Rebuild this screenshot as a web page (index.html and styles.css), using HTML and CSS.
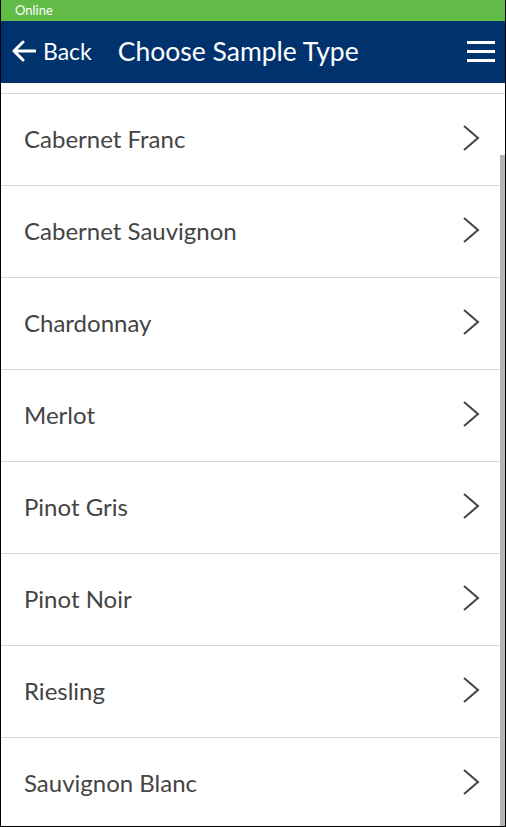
FILE: index.html
```html
<!DOCTYPE html>
<html lang="en">

<head>
    <meta charset="UTF-8">
    <meta name="viewport" content="width=device-width, initial-scale=1.0">
    <title>Choose Sample Type</title>
    <link rel="stylesheet" href="styles.css">
</head>

<body>
    <div class="app">
        <div class="status">Online</div>
        <header class="topbar">
            <a class="back" href="#">
                <svg width="24" height="22" viewBox="0 0 24 22">
                    <path d="M11 2 L2 11 L11 20 M2 11 H23" fill="none" stroke="white" stroke-width="3" stroke-linecap="round" stroke-linejoin="round" />
                </svg>
                <span>Back</span>
            </a>
            <h1>Choose Sample Type</h1>
            <button class="menu" type="button">
                <span></span><span></span><span></span>
            </button>
        </header>
        <div class="list">
            <div class="spacer"></div>
            <a class="item" href="#">Cabernet Franc<svg class="chev" viewBox="0 0 18 28"><path d="M2 2 L16 14 L2 26" /></svg></a>
            <a class="item" href="#">Cabernet Sauvignon<svg class="chev" viewBox="0 0 18 28"><path d="M2 2 L16 14 L2 26" /></svg></a>
            <a class="item" href="#">Chardonnay<svg class="chev" viewBox="0 0 18 28"><path d="M2 2 L16 14 L2 26" /></svg></a>
            <a class="item" href="#">Merlot<svg class="chev" viewBox="0 0 18 28"><path d="M2 2 L16 14 L2 26" /></svg></a>
            <a class="item" href="#">Pinot Gris<svg class="chev" viewBox="0 0 18 28"><path d="M2 2 L16 14 L2 26" /></svg></a>
            <a class="item" href="#">Pinot Noir<svg class="chev" viewBox="0 0 18 28"><path d="M2 2 L16 14 L2 26" /></svg></a>
            <a class="item" href="#">Riesling<svg class="chev" viewBox="0 0 18 28"><path d="M2 2 L16 14 L2 26" /></svg></a>
            <a class="item" href="#">Sauvignon Blanc<svg class="chev" viewBox="0 0 18 28"><path d="M2 2 L16 14 L2 26" /></svg></a>
            <div class="thumb"></div>
        </div>
    </div>
</body>

</html>
```

FILE: styles.css
```css
html,
body {
    margin: 0;
    padding: 0;
    height: 100%;
}

body {
    font-family: Lato, "Open Sans", sans-serif;
    background-color: white;
}

.app {
    height: 100%;
    box-sizing: border-box;
    border: 1px solid black;
    border-top: none;
    display: flex;
    flex-direction: column;
    overflow: hidden;
}

.status {
    flex-shrink: 0;
    background-color: #62bb46;
    color: white;
    font-size: 13px;
    line-height: 21px;
    height: 21px;
    padding-left: 14px;
}

.topbar {
    flex-shrink: 0;
    background-color: #00326e;
    color: white;
    height: 62px;
    display: flex;
    align-items: center;
    padding: 0 10px 2px 11px;
    box-sizing: border-box;
}

.back {
    display: flex;
    align-items: center;
    gap: 7px;
    color: white;
    text-decoration: none;
    font-size: 23px;
}

.topbar h1 {
    flex: 1;
    margin: 0 0 0 26px;
    font-size: 26.5px;
    font-weight: normal;
}

.menu {
    background: none;
    border: none;
    padding: 0;
    width: 28px;
    display: flex;
    flex-direction: column;
    gap: 6px;
    cursor: pointer;
}

.menu span {
    display: block;
    height: 3px;
    background-color: white;
}

.list {
    position: relative;
    flex: 1;
}

.spacer {
    height: 10px;
    border-bottom: 1px solid #d9d9d9;
}

.item {
    display: flex;
    align-items: center;
    justify-content: space-between;
    height: 88px;
    border-bottom: 1px solid #d9d9d9;
    padding: 0 25px 3px 23px;
    color: #444;
    font-size: 24px;
    text-decoration: none;
}

.chev {
    width: 18px;
    height: 28px;
    fill: none;
    stroke: #444;
    stroke-width: 2;
}

.thumb {
    position: absolute;
    right: 0;
    top: 72px;
    bottom: 0;
    width: 5px;
    background-color: #b3b3b3;
}
```
